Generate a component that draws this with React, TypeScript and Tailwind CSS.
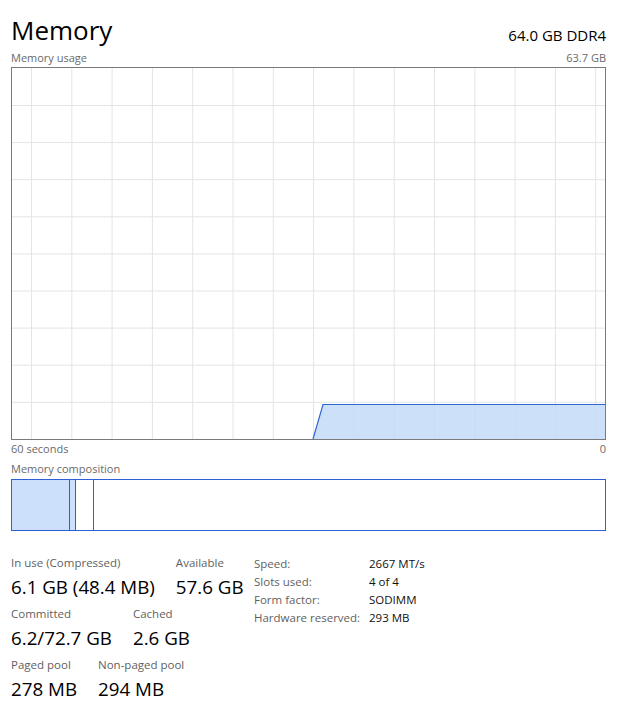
import React from "react";

const font = { fontFamily: '"Segoe UI", "Open Sans", "Noto Sans", sans-serif' };

const vLines = Array.from({ length: 15 }, (_, i) => 19.5 + i * 40.3);
const hLines = Array.from({ length: 9 }, (_, i) => 37.5 + i * 37.1);

function UsageGraph() {
  return (
    <div className="h-[373px] border border-[#7a7a7a] bg-white">
      <svg width="100%" height="100%" viewBox="0 0 593 371" preserveAspectRatio="none" className="block">
        {vLines.map((x) => (
          <line key={`v${x}`} x1={x} y1={0} x2={x} y2={371} stroke="#e4e4e4" strokeWidth={1} />
        ))}
        {hLines.map((y) => (
          <line key={`h${y}`} x1={0} y1={y} x2={593} y2={y} stroke="#e4e4e4" strokeWidth={1} />
        ))}
        <polygon points="301,371 311,336.5 593,336.5 593,371" fill="#c4daf9" fillOpacity={0.85} />
        <polyline points="301,371 311,336.5 593,336.5" fill="none" stroke="#2f65d4" strokeWidth={1.2} />
      </svg>
    </div>
  );
}

function Composition() {
  return (
    <div className="flex h-[52px] border border-[#2f5fd6] bg-white">
      <div className="w-[58px] border-r border-[#2f5fd6] bg-[#cce0fb]" />
      <div className="w-[6px] border-r border-[#2f5fd6] bg-[#cce0fb]" />
      <div className="w-[18px] border-r border-[#2f5fd6]" />
      <div className="flex-1" />
    </div>
  );
}

function Stat({ label, value }: { label: string; value: string }) {
  return (
    <div className="flex flex-col">
      <div className="h-[19px] text-[11.5px] leading-[19px] text-[#5f5f5f]">{label}</div>
      <div className="h-[30px] text-[18.75px] leading-[30px] text-black">{value}</div>
    </div>
  );
}

function Detail({ label, value }: { label: string; value: string }) {
  return (
    <div className="flex h-[18px] items-center text-[11.5px]">
      <div className="w-[115px] text-[#5f5f5f]">{label}</div>
      <div className="text-[#111]">{value}</div>
    </div>
  );
}

export default function App() {
  return (
    <div className="h-[706px] w-[617px] bg-white px-[11px]" style={font}>
      <div className="flex h-[50px] items-end justify-between pb-[3px]">
        <div className="text-[26px] leading-[34px] text-black">Memory</div>
        <div className="pb-[2px] text-[15px] leading-[20px] text-black">64.0 GB DDR4</div>
      </div>
      <div className="flex h-[17px] items-center justify-between text-[11px] text-[#6a6a6a]">
        <span>Memory usage</span>
        <span>63.7 GB</span>
      </div>
      <UsageGraph />
      <div className="flex h-[19px] items-center justify-between text-[11px] text-[#6a6a6a]">
        <span>60 seconds</span>
        <span>0</span>
      </div>
      <div className="flex h-[20px] items-center text-[11px] text-[#6a6a6a]">
        <span>Memory composition</span>
      </div>
      <Composition />
      <div className="mt-[22px] flex">
        <div className="flex w-[243px] flex-col gap-[2px]">
          <div className="flex gap-[21px]">
            <Stat label="In use (Compressed)" value="6.1 GB (48.4 MB)" />
            <Stat label="Available" value="57.6 GB" />
          </div>
          <div className="flex gap-[21px]">
            <Stat label="Committed" value="6.2/72.7 GB" />
            <Stat label="Cached" value="2.6 GB" />
          </div>
          <div className="flex gap-[21px]">
            <Stat label="Paged pool" value="278 MB" />
            <Stat label="Non-paged pool" value="294 MB" />
          </div>
        </div>
        <div className="flex flex-col pt-[2px]">
          <Detail label="Speed:" value="2667 MT/s" />
          <Detail label="Slots used:" value="4 of 4" />
          <Detail label="Form factor:" value="SODIMM" />
          <Detail label="Hardware reserved:" value="293 MB" />
        </div>
      </div>
    </div>
  );
}
